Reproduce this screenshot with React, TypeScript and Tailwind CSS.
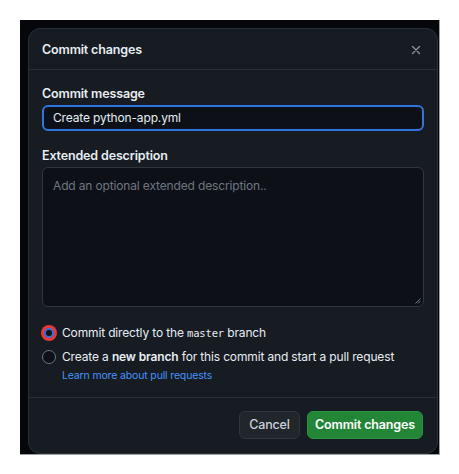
import React from 'react';

const font = { fontFamily: 'Inter, "Noto Sans", "Liberation Sans", sans-serif' };

const Radio: React.FC<{ checked?: boolean }> = ({ checked }) => (
  <span className="w-4 h-4 flex items-center justify-center shrink-0">
    {checked ? (
      <span className="w-4 h-4 rounded-full bg-[#e5383b] flex items-center justify-center">
        <span className="w-[10px] h-[10px] rounded-full bg-[#2f6fd6] flex items-center justify-center">
          <span className="w-[6px] h-[6px] rounded-full bg-[#0d1117]" />
        </span>
      </span>
    ) : (
      <span className="w-[14px] h-[14px] rounded-full border border-[#6e7681] bg-[#0d1117]" />
    )}
  </span>
);

export default function App() {
  return (
    <div className="w-[459px] h-[474px] bg-white pt-5 pl-5" style={font}>
      <div className="w-[420px] h-[435px] bg-[#05070a] border-r border-b border-[#9aa0a6] flex pt-2 pl-2">
        <div className="w-[410px] h-[426px] bg-[#171b22] rounded-[12px] border border-[#2b3038] flex flex-col text-[#e6edf3] text-[12px] leading-[18px] tracking-[-0.15px]">
          <div className="h-[41px] shrink-0 px-[13px] pt-[2px] flex items-center justify-between border-b border-[#2b3038]">
            <span className="font-semibold text-[12.5px]">Commit changes</span>
            <svg width="10" height="10" viewBox="0 0 10 10" className="mr-[3px]">
              <path d="M1.5 1.5 L8.5 8.5 M8.5 1.5 L1.5 8.5" stroke="#8b949e" strokeWidth="1.3" strokeLinecap="round" />
            </svg>
          </div>
          <div className="flex-1 px-[13px] pt-[15px] flex flex-col">
            <label className="font-semibold text-[12.5px] leading-[18px]">Commit message</label>
            <div className="mt-[2px] h-[26px] shrink-0 rounded-[6px] border-2 border-[#2f74e0] bg-[#0d1117] flex items-center px-[9px]">
              Create python-app.yml
            </div>
            <label className="mt-[16px] font-semibold text-[12.5px] leading-[18px]">Extended description</label>
            <div className="mt-[2px] h-[140px] shrink-0 rounded-[6px] border border-[#30363d] bg-[#0d1117] relative px-[10px] pt-[9px] text-[#6e7681]">
              Add an optional extended description..
              <svg width="6" height="6" viewBox="0 0 6 6" className="absolute right-[2px] bottom-[2px]">
                <path d="M5.5 0.5 L0.5 5.5 M5.5 3 L3 5.5" stroke="#8b949e" strokeWidth="0.8" />
              </svg>
            </div>
            <div className="mt-[17px] -ml-[1px] flex items-center gap-[5px]">
              <Radio checked />
              <span>
                Commit directly to the{' '}
                <span className="text-[10.5px]" style={{ fontFamily: '"DejaVu Sans Mono", "Liberation Mono", monospace' }}>master</span>{' '}
                branch
              </span>
            </div>
            <div className="mt-[6px] -ml-[1px] flex items-center gap-[5px] whitespace-nowrap">
              <Radio />
              <span>
                Create a <b className="font-semibold">new branch</b> for this commit and start a pull request
              </span>
            </div>
            <a className="mt-[2px] ml-[20px] text-[10.5px] leading-[16px] text-[#4493f8]">Learn more about pull requests</a>
          </div>
          <div className="h-[56px] shrink-0 border-t border-[#2b3038] flex items-center justify-end gap-[7px] px-[14px] pb-[1px]">
            <button className="h-[28px] w-[61px] rounded-[6px] bg-[#21262d] border border-[#30363d] font-medium text-[12.5px] text-[#c9d1d9]">
              Cancel
            </button>
            <button className="h-[28px] w-[116px] rounded-[6px] bg-[#238636] border border-[#2a9140] font-semibold text-[12.5px] text-white whitespace-nowrap">
              Commit changes
            </button>
          </div>
        </div>
      </div>
    </div>
  );
}
